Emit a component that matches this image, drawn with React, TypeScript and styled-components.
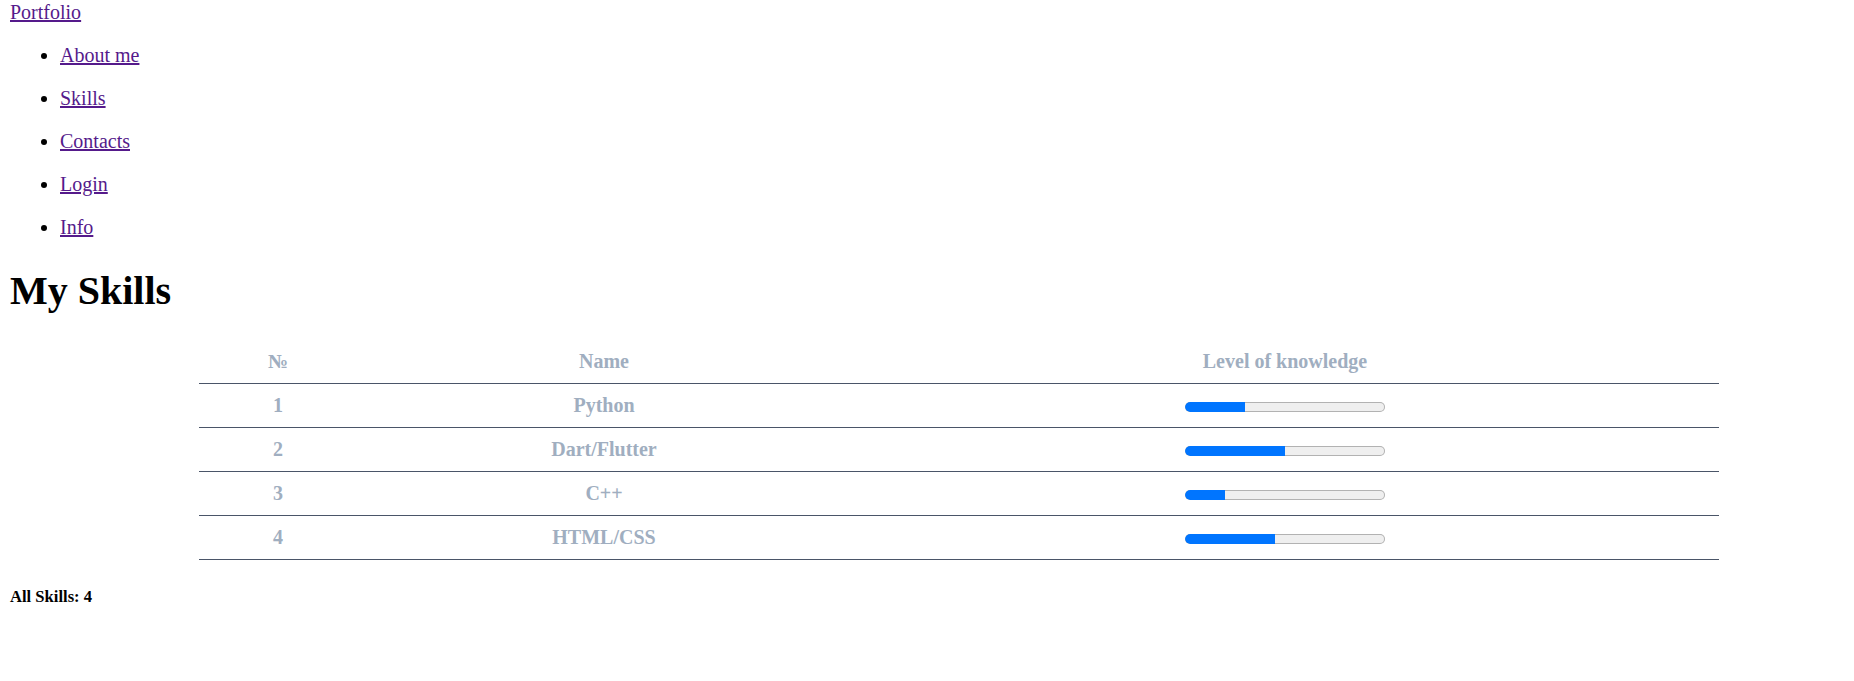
import React from "react";
import styled, { createGlobalStyle } from "styled-components";

const GlobalStyle = createGlobalStyle`
  html, body {
    margin: 0;
    padding: 0;
    background: #ffffff;
  }
  body {
    font-family: "Liberation Serif", "Times New Roman", serif;
    font-size: 20px;
    color: #000000;
  }
`;

const Page = styled.div`
  padding: 1px 10px 0;
`;

const Header = styled.header`
  display: block;
`;

const NavLink = styled.a`
  color: #551a8b;
  text-decoration: underline;
  font-size: 20px;
`;

const NavList = styled.ul`
  margin: 20px 0;
  padding-left: 50px;
  list-style: disc;
`;

const NavItem = styled.li`
  margin: 20px 0;
`;

const Title = styled.h1`
  font-size: 40px;
  font-weight: bold;
  margin: 28px 0 24.5px;
`;

const SkillsTable = styled.table`
  border-collapse: collapse;
  margin-left: 189px;
  width: 1520px;
  table-layout: fixed;
`;

const Row = styled.tr`
  border-bottom: 1px solid #4a5568;
`;

const HeadCell = styled.th<{ $w: number }>`
  box-sizing: border-box;
  width: ${(p) => p.$w}px;
  padding: 11px 10px 10px;
  text-align: center;
  font-weight: bold;
  font-size: 20px;
  color: #a0aec0;
`;

const Cell = styled.td`
  padding: 10px;
  text-align: center;
  vertical-align: middle;
  font-weight: bold;
  font-size: 20px;
  color: #a0aec0;
`;

const Track = styled.div`
  display: inline-flex;
  vertical-align: middle;
  width: 200px;
  height: 10px;
  border-radius: 5px;
  background: #efefef;
  box-shadow: inset 0 0 0 1px #b2b2b2;
  overflow: hidden;
`;

const Fill = styled.div`
  height: 100%;
  background: #0075ff;
  border-radius: 5px 0 0 5px;
`;

const Summary = styled.h5`
  font-size: 16.6px;
  font-weight: bold;
  margin: 27.7px 0;
`;

const skills = [
  { id: 1, name: "Python", level: 30 },
  { id: 2, name: "Dart/Flutter", level: 50 },
  { id: 3, name: "C++", level: 20 },
  { id: 4, name: "HTML/CSS", level: 45 },
];

const links = ["About me", "Skills", "Contacts", "Login", "Info"];

export default function App() {
  return (
    <>
      <GlobalStyle />
      <Page>
        <Header>
          <NavLink href="#">Portfolio</NavLink>
          <NavList>
            {links.map((l) => (
              <NavItem key={l}>
                <NavLink href="#">{l}</NavLink>
              </NavItem>
            ))}
          </NavList>
        </Header>
        <Title>My Skills</Title>
        <SkillsTable>
          <thead>
            <Row>
              <HeadCell $w={158}>№</HeadCell>
              <HeadCell $w={494}>Name</HeadCell>
              <HeadCell $w={868}>Level of knowledge</HeadCell>
            </Row>
          </thead>
          <tbody>
            {skills.map((s) => (
              <Row key={s.id}>
                <Cell>{s.id}</Cell>
                <Cell>{s.name}</Cell>
                <Cell>
                  <Track>
                    <Fill style={{ width: `${s.level}%` }} />
                  </Track>
                </Cell>
              </Row>
            ))}
          </tbody>
        </SkillsTable>
        <Summary>All Skills: {skills.length}</Summary>
      </Page>
    </>
  );
}
